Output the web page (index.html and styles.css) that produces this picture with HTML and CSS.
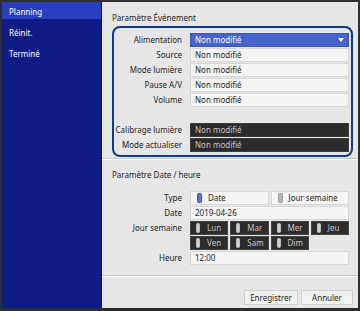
FILE: index.html
```html
<!DOCTYPE html>
<html lang="fr">
<head>
<meta charset="utf-8">
<link rel="stylesheet" href="styles.css">
</head>
<body>
<div class="app">
  <nav class="sidebar">
    <div class="nav-item active">Planning</div>
    <div class="nav-item">Réinit.</div>
    <div class="nav-item">Terminé</div>
  </nav>
  <main class="main">
    <section class="section sec-event">
      <div class="sec-title">Paramètre Événement</div>
      <div class="focus-box">
        <div class="grid">
          <div class="label">Alimentation</div>
          <div class="field select">Non modifié<span class="caret"></span></div>
          <div class="label">Source</div>
          <div class="field">Non modifié</div>
          <div class="label">Mode lumière</div>
          <div class="field">Non modifié</div>
          <div class="label">Pause A/V</div>
          <div class="field">Non modifié</div>
          <div class="label">Volume</div>
          <div class="field">Non modifié</div>
          <div class="spacer"></div>
          <div class="label">Calibrage lumière</div>
          <div class="field dark">Non modifié</div>
          <div class="label">Mode actualiser</div>
          <div class="field dark">Non modifié</div>
        </div>
      </div>
    </section>
    <section class="section sec-date">
      <div class="sec-title">Paramètre Date / heure</div>
      <div class="grid plain">
        <div class="label">Type</div>
        <div class="split">
          <div class="opt"><span class="tog on"></span>Date</div>
          <div class="opt"><span class="tog"></span>Jour semaine</div>
        </div>
        <div class="label">Date</div>
        <div class="field">2019-04-26</div>
        <div class="label label-days">Jour semaine</div>
        <div class="days">
          <div class="day"><span class="tog"></span>Lun</div>
          <div class="day"><span class="tog"></span>Mar</div>
          <div class="day"><span class="tog"></span>Mer</div>
          <div class="day"><span class="tog"></span>Jeu</div>
          <div class="day"><span class="tog"></span>Ven</div>
          <div class="day"><span class="tog"></span>Sam</div>
          <div class="day"><span class="tog"></span>Dim</div>
        </div>
        <div class="label">Heure</div>
        <div class="field">12:00</div>
      </div>
    </section>
    <footer class="footer">
      <button class="btn btn-save">Enregistrer</button>
      <button class="btn btn-cancel">Annuler</button>
    </footer>
  </main>
</div>
</body>
</html>
```

FILE: styles.css
```css
* { box-sizing: border-box; }
html, body { margin: 0; padding: 0; }
body {
  font-family: "Noto Sans", "Open Sans", sans-serif;
  font-size: 8px;
  color: #222;
  background: #333;
}
.app {
  width: 360px;
  height: 311px;
  border: 2px solid #2e2e2e;
  border-bottom-width: 3px;
  display: flex;
  background: #e6e6e6;
}
.sidebar {
  width: 100px;
  background: #101c86;
  border-right: 1px solid #0a1470;
  display: flex;
  flex-direction: column;
  gap: 4px;
}
.nav-item {
  height: 17px;
  line-height: 19px;
  padding-left: 7px;
  color: #fff;
  font-size: 8px;
}
.nav-item.active { background: #2a3fc0; }
.main {
  flex: 1;
  display: flex;
  flex-direction: column;
  background: #e6e6e6;
}
.section { padding: 10px 5px 0 10px; }
.sec-title { height: 12px; line-height: 12px; margin-bottom: 2px; padding-left: 0; }
.sec-event { padding-bottom: 1px; border-bottom: 1px solid #c9c9c9; }
.sec-date { border-top: 1px solid #fafafa; padding-top: 9px; padding-bottom: 10px; border-bottom: 1px solid #c4c4c4; }
.focus-box {
  border: 2px solid #0d3c8e;
  border-radius: 8px;
  padding: 5px 2px 3px 0;
}
.grid {
  display: grid;
  grid-template-columns: 68px 1fr;
  column-gap: 8px;
  row-gap: 1px;
  grid-auto-rows: 14px;
}
.grid.plain { padding: 10px 4px 0 2px; }
.sec-date .sec-title { margin-bottom: 0; }
.label {
  grid-column: 1;
  text-align: right;
  line-height: 14px;
  white-space: nowrap;
  color: #222;
}
.label-days { grid-row: span 2; }
.spacer { grid-column: 1 / 3; }
.field {
  grid-column: 2;
  background: #f4f4f4;
  border: 1px solid #d6d6d6;
  line-height: 12px;
  padding-left: 4px;
  color: #1e1e1e;
  white-space: nowrap;
  position: relative;
}
.field.select {
  background: #4764cb;
  border-color: #3a55b8;
  color: #fff;
}
.caret {
  position: absolute;
  right: 4px;
  top: 4px;
  width: 0; height: 0;
  border-left: 3.5px solid transparent;
  border-right: 3.5px solid transparent;
  border-top: 4px solid #fff;
}
.field.dark {
  background: #2b2b2b;
  border-color: #3c3c3c;
  color: #c8c8c8;
}
.split {
  grid-column: 2;
  display: grid;
  grid-template-columns: 1fr 1fr;
  gap: 2px;
}
.opt {
  background: #f4f4f4;
  border: 1px solid #d6d6d6;
  color: #1e1e1e;
  display: flex;
  align-items: center;
  padding-left: 6px;
  line-height: 12px;
  white-space: nowrap;
}
.tog {
  display: inline-block;
  width: 5px;
  height: 10px;
  border-radius: 1.5px;
  background: #b6b6b6;
  border: 1px solid #9a9a9a;
  margin-right: 6px;
  flex: none;
}
.tog.on { background: #5577e6; border-color: #3050c0; }
.days {
  grid-column: 2;
  grid-row: span 2;
  display: grid;
  grid-template-columns: repeat(4, 1fr);
  grid-auto-rows: 14px;
  column-gap: 2px;
  row-gap: 1px;
}
.day {
  background: #2c2c2c;
  border: 1px solid #444;
  color: #c8c8c8;
  display: flex;
  align-items: center;
  padding-left: 5px;
  line-height: 12px;
}
.day .tog { background: #cfcfcf; border-color: #bdbdbd; width: 4px; margin-right: 7px; }
.footer {
  flex: 1;
  border-top: 1px solid #fafafa;
  display: flex;
  justify-content: flex-end;
  align-items: flex-start;
  gap: 3px;
  padding: 13px 5px 0 0;
}
.btn {
  font-family: inherit;
  font-size: 8px;
  color: #222;
  height: 15px;
  background: #f2f2f2;
  border: 1px solid #cfcfcf;
  border-radius: 0;
  padding: 0;
  line-height: 13px;
}
.btn-save { width: 54px; }
.btn-cancel { width: 52px; }
```
